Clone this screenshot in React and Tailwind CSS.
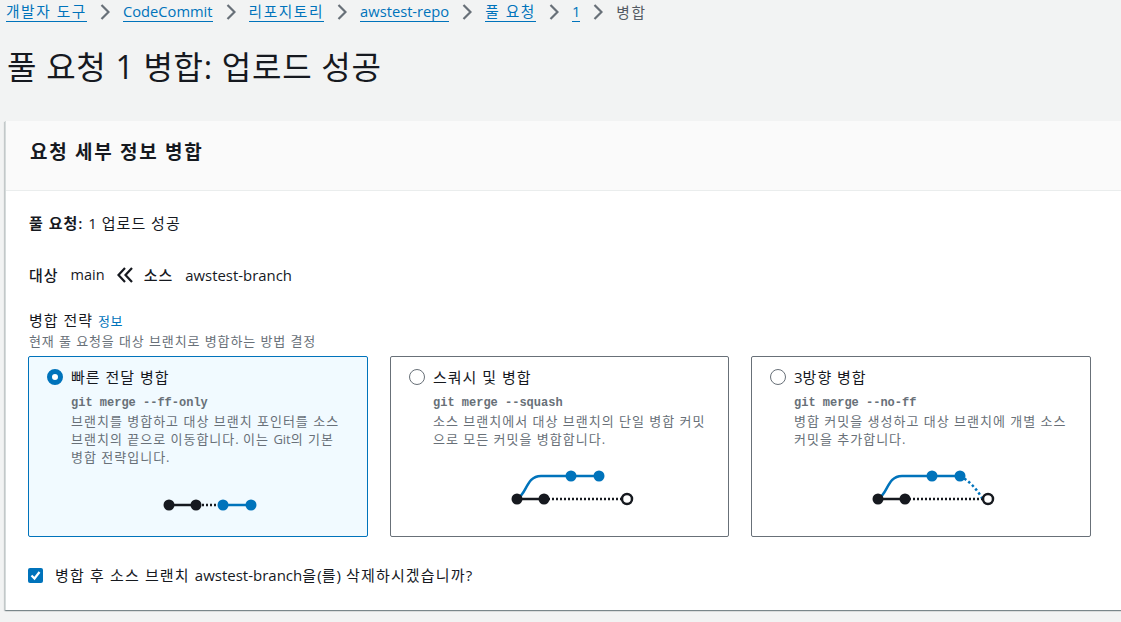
import React from "react";

const crumbs = ["개발자 도구", "CodeCommit", "리포지토리", "awstest-repo", "풀 요청", "1"];

const strategies = [
  {
    title: "빠른 전달 병합",
    command: "git merge --ff-only",
    lines: ["브랜치를 병합하고 대상 브랜치 포인터를 소스", "브랜치의 끝으로 이동합니다. 이는 Git의 기본", "병합 전략입니다."],
    selected: true,
    diagram: "ff",
  },
  {
    title: "스쿼시 및 병합",
    command: "git merge --squash",
    lines: ["소스 브랜치에서 대상 브랜치의 단일 병합 커밋", "으로 모든 커밋을 병합합니다."],
    diagram: "squash",
  },
  {
    title: "3방향 병합",
    command: "git merge --no-ff",
    lines: ["병합 커밋을 생성하고 대상 브랜치에 개별 소스", "커밋을 추가합니다."],
    diagram: "three",
  },
];

const BLUE = "#0073bb";
const DARK = "#16191f";

// hangul gets letter spacing from the parent, latin runs stay at normal spacing
const Mixed = ({ text }) =>
  text.split(/([A-Za-z0-9\-?().:]+)/).map((part, i) =>
    i % 2 === 1 ? (
      <span key={i} className="tracking-normal">
        {part}
      </span>
    ) : (
      part
    )
  );

const CrumbChevron = () => (
  <svg width="10" height="16" viewBox="0 0 10 16" className="mx-[13px] shrink-0">
    <path d="M1.5 1 L8.5 8 L1.5 15" fill="none" stroke="#687078" strokeWidth="2.2" />
  </svg>
);

const FastForwardDiagram = () => (
  <svg width="94" height="12" viewBox="0 0 94 12" className="block">
    <line x1="6" y1="6" x2="33" y2="6" stroke={DARK} strokeWidth="2.5" />
    <line x1="39" y1="6" x2="60" y2="6" stroke={DARK} strokeWidth="2.5" strokeDasharray="2 2" />
    <line x1="60" y1="6" x2="88" y2="6" stroke={BLUE} strokeWidth="2.5" />
    <circle cx="6" cy="6" r="5.5" fill={DARK} />
    <circle cx="33" cy="6" r="5.5" fill={DARK} />
    <circle cx="60" cy="6" r="5.5" fill={BLUE} />
    <circle cx="88" cy="6" r="5.5" fill={BLUE} />
  </svg>
);

const BranchDiagram = ({ merge }) => (
  <svg width="124" height="36" viewBox="0 0 124 36" className="block">
    <line x1="6" y1="29" x2="33" y2="29" stroke={DARK} strokeWidth="2.5" />
    <line x1="33" y1="29" x2="110" y2="29" stroke={DARK} strokeWidth="2.5" strokeDasharray="2 2" />
    <path d="M6 29 C16 24 15 6 30 6 L88 6" fill="none" stroke={BLUE} strokeWidth="2.5" />
    {merge && <path d="M88 6 C96 10 104 18 110 28" fill="none" stroke={BLUE} strokeWidth="2.5" strokeDasharray="2.5 2.5" />}
    <circle cx="6" cy="29" r="5.5" fill={DARK} />
    <circle cx="33" cy="29" r="5.5" fill={DARK} />
    <circle cx="60" cy="6" r="5.5" fill={BLUE} />
    <circle cx="88" cy="6" r="5.5" fill={BLUE} />
    <circle cx="116" cy="29" r="5" fill="white" stroke={DARK} strokeWidth="2.5" />
  </svg>
);

const StrategyCard = ({ item }) => (
  <div
    className={`relative h-[181px] rounded-[2px] border pl-[18px] pt-[10px] ${
      item.selected ? "border-[#0073bb] bg-[#f1faff]" : "border-[#687078] bg-white"
    }`}
  >
    <div className="flex items-center gap-[8px]">
      {item.selected ? (
        <span className="h-[16px] w-[16px] rounded-full border-[5px] border-[#0073bb] bg-white" />
      ) : (
        <span className="h-[16px] w-[16px] rounded-full border-[1.5px] border-[#687078] bg-white" />
      )}
      <span className="text-[15px] leading-[20px] tracking-[1px] text-[#16191f]">
        <Mixed text={item.title} />
      </span>
    </div>
    <div className="ml-[24px] mt-[7px] text-[13px] leading-[18px] tracking-[1px] text-[#687078]">
      <div className="font-['Liberation_Mono',monospace] text-[12px] font-bold tracking-normal">{item.command}</div>
      {item.lines.map((line) => (
        <div key={line} className="whitespace-nowrap">
          <Mixed text={line} />
        </div>
      ))}
    </div>
    <div className={`absolute ${item.diagram === "ff" ? "left-[134px] top-[142px]" : "left-[120px] top-[113px]"}`}>
      {item.diagram === "ff" ? <FastForwardDiagram /> : <BranchDiagram merge={item.diagram === "three"} />}
    </div>
  </div>
);

export default function App() {
  return (
    <div className="h-[622px] w-[1121px] overflow-hidden bg-[#f2f3f3] font-['Open_Sans','Noto_Sans_CJK_KR',sans-serif] text-[#16191f]">
      <nav className="flex h-[24px] items-center whitespace-nowrap pl-[6px] text-[14.7px] leading-[20px] tracking-[1.6px]">
        {crumbs.map((crumb) => (
          <React.Fragment key={crumb}>
            <a className="border-b border-[#0073bb] leading-[19px] text-[#0073bb]">
              <Mixed text={crumb} />
            </a>
            <CrumbChevron />
          </React.Fragment>
        ))}
        <span className="text-[#545b64]">병합</span>
      </nav>

      <h1 className="mt-[22px] whitespace-nowrap pl-[7px] text-[32px] font-normal leading-[42px] tracking-[0.7px]">
        풀 요청 1 병합: 업로드 성공
      </h1>

      <section className="ml-[5px] mt-[33px] h-[489px] w-[1130px] border-l border-[#d5dbdb] bg-white shadow-[0_1px_1px_0_rgba(0,28,36,0.3),1px_1px_1px_0_rgba(0,28,36,0.15),-1px_1px_1px_0_rgba(0,28,36,0.15)]">
        <header className="flex h-[70px] items-center border-b border-[#eaeded] bg-[#fafafa] pb-[8px] pl-[24px]">
          <h2 className="text-[19px] font-bold leading-[22px] tracking-[1.7px]">요청 세부 정보 병합</h2>
        </header>

        <div className="pl-[22px] pr-[39px]">
          <p className="ml-[1px] mt-[22px] text-[15px] leading-[20px] tracking-[1px]">
            <span className="font-semibold">풀 요청:</span> <Mixed text="1 업로드 성공" />
          </p>

          <div className="ml-[1px] mt-[32px] flex h-[20px] items-center text-[15px] tracking-[1px]">
            <span className="font-medium">대상</span>
            <span className="ml-[12px] text-[14.5px] tracking-normal">main</span>
            <svg width="16" height="16" viewBox="0 0 16 16" className="ml-[12px] shrink-0">
              <path d="M8 1 L1.5 8 L8 15 M15 1 L8.5 8 L15 15" fill="none" stroke={DARK} strokeWidth="2.2" />
            </svg>
            <span className="ml-[11px] font-medium">소스</span>
            <span className="ml-[12px] text-[14.9px] tracking-normal">awstest-branch</span>
          </div>

          <div className="ml-[1px] mt-[25px] text-[15px] leading-[20px] tracking-[1px]">
            병합 전략 <span className="text-[13px] tracking-[0.5px] text-[#0073bb]">정보</span>
          </div>
          <div className="ml-[1px] whitespace-nowrap text-[13px] leading-[20px] tracking-[0.9px] text-[#687078]">
            현재 풀 요청을 대상 브랜치로 병합하는 방법 결정
          </div>

          <div className="mt-[5px] grid grid-cols-[340px_339px_340px] gap-x-[22px]">
            {strategies.map((item) => (
              <StrategyCard key={item.command} item={item} />
            ))}
          </div>

          <label className="mt-[28px] flex items-center gap-[12px] whitespace-nowrap text-[15px] leading-[20px] tracking-[1.15px]">
            <span className="flex h-[15px] w-[15px] items-center justify-center rounded-[2px] bg-[#0073bb]">
              <svg width="11" height="11" viewBox="0 0 11 11">
                <path d="M1.5 5.5 L4.5 8.5 L9.5 2" fill="none" stroke="white" strokeWidth="2.2" />
              </svg>
            </span>
            <span>
              <Mixed text="병합 후 소스 브랜치 awstest-branch을(를) 삭제하시겠습니까?" />
            </span>
          </label>
        </div>
      </section>
    </div>
  );
}
